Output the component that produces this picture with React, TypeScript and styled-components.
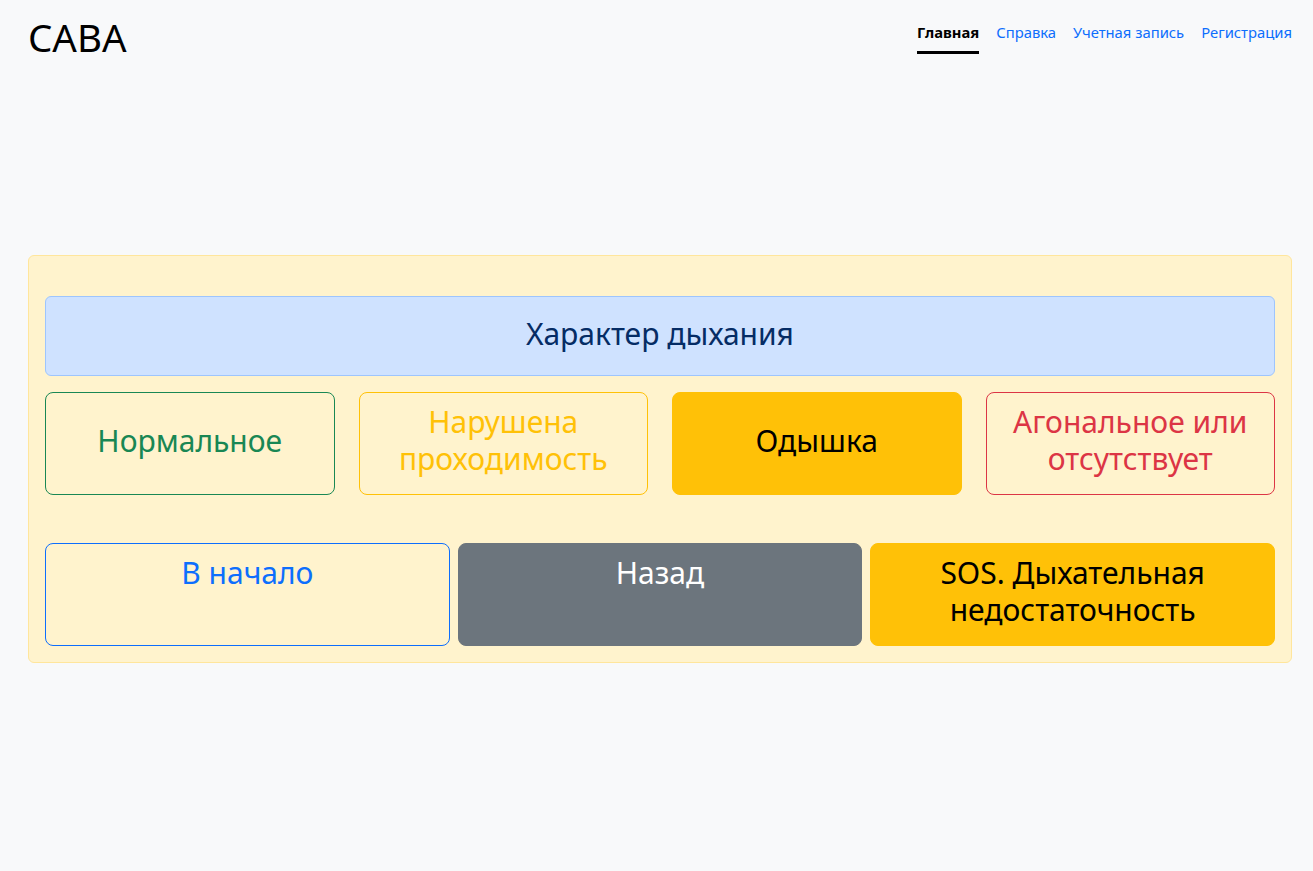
import React from "react";
import styled, { createGlobalStyle, css } from "styled-components";

const GlobalStyle = createGlobalStyle`
  html, body {
    margin: 0;
    padding: 0;
    background: #f8f9fa;
  }
  body {
    font-family: "Segoe UI", "Noto Sans", "Open Sans", sans-serif;
    color: #212529;
  }
  * { box-sizing: border-box; }
`;

const Page = styled.div`
  padding: 0 21px 0 28px;
  min-height: 871px;
`;

const Header = styled.header`
  height: 70px;
  display: flex;
  justify-content: space-between;
  align-items: flex-start;
`;

const Brand = styled.div`
  margin-top: 14px;
  font-size: 38.5px;
  line-height: 1.2;
  color: #000;
`;

const Nav = styled.nav`
  display: flex;
  gap: 17px;
  margin-top: 21px;
`;

const NavLink = styled.a<{ $active?: boolean }>`
  font-size: 14.8px;
  line-height: 22.5px;
  padding-bottom: 7px;
  text-decoration: none;
  color: #0d6efd;
  border-bottom: 3px solid transparent;
  cursor: pointer;
  ${(p) =>
    p.$active &&
    css`
      color: #000;
      font-weight: 700;
      border-bottom-color: #000;
    `}
`;

const Card = styled.section`
  margin-top: 185px;
  background: #fff3cd;
  border: 1px solid #ffe69c;
  border-radius: 6px;
  padding: 40px 16px 16px;
`;

const TitleBox = styled.div`
  background: #cfe2ff;
  border: 1px solid #9ec5fe;
  border-radius: 6px;
  padding: 18px 16px 23px;
  text-align: center;
  font-size: 30px;
  line-height: 37px;
  color: #052c65;
`;

const ChoiceGrid = styled.div`
  display: grid;
  grid-template-columns: repeat(4, 1fr);
  column-gap: 24px;
  margin-top: 16px;
`;

type Tone = "success" | "warning" | "danger" | "primary" | "secondary";

const toneColor: Record<Tone, string> = {
  success: "#198754",
  warning: "#ffc107",
  danger: "#dc3545",
  primary: "#0d6efd",
  secondary: "#6c757d",
};

const toneText: Record<Tone, string> = {
  success: "#fff",
  warning: "#000",
  danger: "#fff",
  primary: "#fff",
  secondary: "#fff",
};

const buttonBase = css<{ $tone: Tone; $solid?: boolean }>`
  border: 1px solid ${(p) => toneColor[p.$tone]};
  border-radius: 8px;
  font-size: 30px;
  line-height: 37px;
  text-align: center;
  cursor: pointer;
  padding: 10px 16px 17px;
  background: ${(p) => (p.$solid ? toneColor[p.$tone] : "transparent")};
  color: ${(p) => (p.$solid ? toneText[p.$tone] : toneColor[p.$tone])};
`;

const ChoiceButton = styled.div<{ $tone: Tone; $solid?: boolean }>`
  ${buttonBase};
  display: flex;
  align-items: center;
  justify-content: center;
`;

const ActionGrid = styled.div`
  display: grid;
  grid-template-columns: repeat(3, 1fr);
  column-gap: 8px;
  margin-top: 48px;
`;

const ActionButton = styled.div<{ $tone: Tone; $solid?: boolean }>`
  ${buttonBase};
`;

export default function App() {
  return (
    <>
      <GlobalStyle />
      <Page>
        <Header>
          <Brand>CABA</Brand>
          <Nav>
            <NavLink $active>Главная</NavLink>
            <NavLink>Справка</NavLink>
            <NavLink>Учетная запись</NavLink>
            <NavLink>Регистрация</NavLink>
          </Nav>
        </Header>
        <Card>
          <TitleBox>Характер дыхания</TitleBox>
          <ChoiceGrid>
            <ChoiceButton $tone="success">Нормальное</ChoiceButton>
            <ChoiceButton $tone="warning">Нарушена проходимость</ChoiceButton>
            <ChoiceButton $tone="warning" $solid>
              Одышка
            </ChoiceButton>
            <ChoiceButton $tone="danger">Агональное или отсутствует</ChoiceButton>
          </ChoiceGrid>
          <ActionGrid>
            <ActionButton $tone="primary">В начало</ActionButton>
            <ActionButton $tone="secondary" $solid>
              Назад
            </ActionButton>
            <ActionButton $tone="warning" $solid>
              SOS. Дыхательная недостаточность
            </ActionButton>
          </ActionGrid>
        </Card>
      </Page>
    </>
  );
}
